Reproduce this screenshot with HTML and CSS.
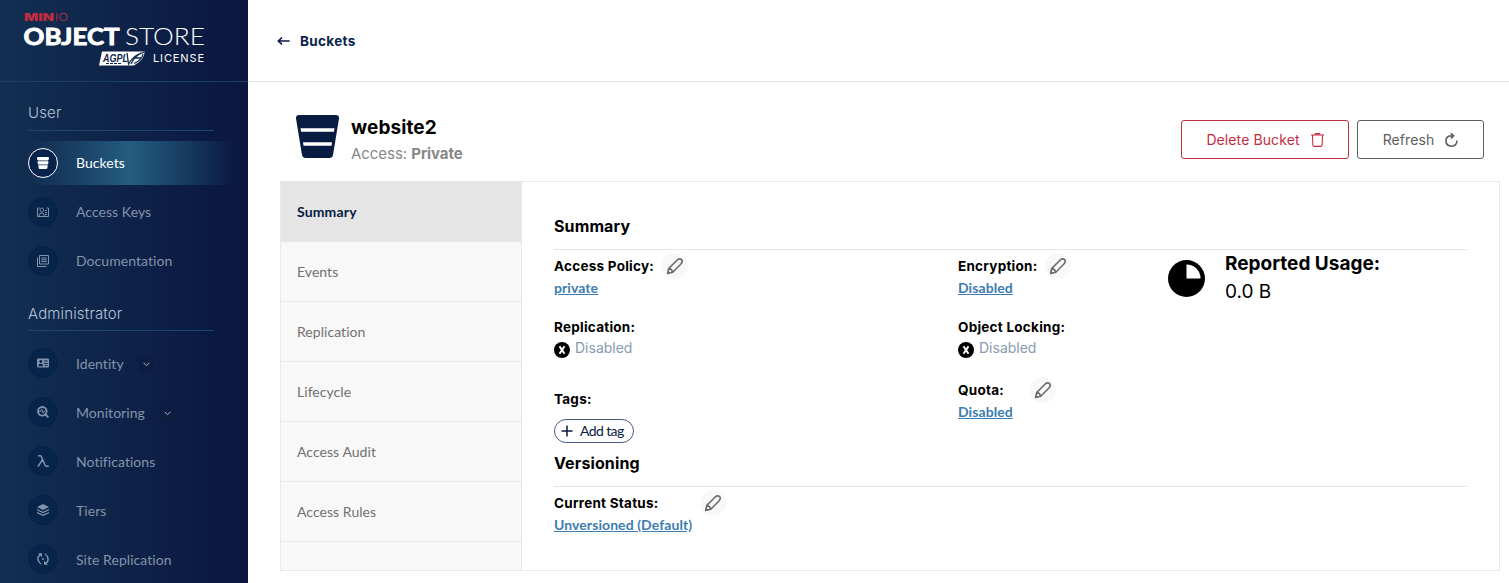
FILE: index.html
```html
<!DOCTYPE html>
<html lang="en">
<head>
<meta charset="utf-8">
<title>MinIO Console</title>
<link rel="stylesheet" href="styles.css">
</head>
<body>
<svg class="defs" width="0" height="0">
  <symbol id="pencil" viewBox="0 0 26 26"><path d="M5.600 20.500L6.800 15.400 15 7.200Q17.600 5 19.600 6.600 21.200 8.600 18.900 11L10.800 19.200zM6.800 15.400Q9.800 16 10.800 19.200" fill="none" stroke="#6d6d6d" stroke-width="1.600" stroke-linejoin="round"/><path d="M5 21l.8-3.600 2.800 2.800z" fill="#6d6d6d"/></symbol>
  <symbol id="off" viewBox="0 0 16 16"><circle cx="8" cy="8" r="8"/><path d="M5.500 4.300l5 7.400M10.500 4.300l-5 7.400" stroke="#fff" stroke-width="2"/></symbol>
</svg>
<div class="app">
  <aside class="sidebar">
    <div class="brand">
      <svg width="248" height="81" viewBox="0 0 248 81">
        <text x="24" y="21" class="logo-min" textLength="30" lengthAdjust="spacingAndGlyphs">MIN</text>
        <text x="55" y="21" class="logo-io" textLength="13" lengthAdjust="spacingAndGlyphs">IO</text>
        <text x="23.500" y="45" class="logo-object" textLength="96" lengthAdjust="spacingAndGlyphs">OBJECT</text>
        <text x="125" y="45" class="logo-store" textLength="80" lengthAdjust="spacingAndGlyphs">STORE</text>
        <path d="M102 51.500H144.500Q145 59 134 65.500H99z" fill="#fff"/>
        <text x="103" y="61.500" class="logo-agpl" textLength="25" lengthAdjust="spacingAndGlyphs">AGPL</text>
        <path d="M106 63.500h15" stroke="#10284c" stroke-width="1" stroke-dasharray="3 1"/>
        <path d="M127 53l1.500 11Q132 57 141 53M131 64Q134 56 144 52M134 63.500Q142 60 143 54M135 58h6" fill="none" stroke="#10284c" stroke-width="1.300"/>
        <text x="153" y="62" class="logo-license" textLength="51">LICENSE</text>
      </svg>
    </div>
    <nav class="menu">
      <div class="group-title">User</div>
      <a class="item active"><span class="circle"><svg viewBox="0 0 12 12"><path d="M.5 0h11l.5 1-.3 2H.3L0 1zM.5 4.200h11l-.4 3H.9zM1.200 8.300h9.600l-.6 3.200-.7.500h-7l-.7-.5z"/><path d="M1 3h10v1.200H1zM1.500 7.200h9v1.100h-9z" opacity=".5"/></svg></span>Buckets</a>
      <a class="item"><span class="circle"><svg viewBox="0 0 12 12"><path d="M2.500 2H.5v8.500h11V2H9.500M8 4.500h2M8 6.500h2M8 8.500h2M2 10q.2-3 2.700-3t2.700 3M4.700 2a1.800 2 0 1 0 .1 0" fill="none" stroke="currentColor"/></svg></span>Access Keys</a>
      <a class="item"><span class="circle"><svg viewBox="0 0 12 12"><path d="M2.500.5h9v8.500h-9zM.5 2.500v9h9M4.200 3h5.600M4.200 4.800h5.600M4.200 6.600h5.600" fill="none" stroke="currentColor"/></svg></span>Documentation</a>
      <div class="group-title admin">Administrator</div>
      <a class="item low"><span class="circle"><svg viewBox="0 0 12 12"><path fill-rule="evenodd" d="M1.300 1.500h9.400Q12 1.500 12 2.800v6.500q0 1.200-1.300 1.200H1.300Q0 10.500 0 9.300V2.800q0-1.300 1.300-1.300zM3.800 3a1.500 1.500 0 1 0 .1 0M1.200 9.200h5Q6 6.800 3.800 6.800T1.200 9.200M7 3.600v1h3.800v-1zM7 6v1h3.800V6zM7.300 8.200v.9h3.500v-.9z"/></svg></span><span>Identity</span><span class="chevron"><svg viewBox="0 0 7 5"><path d="M.5.7l3 3 3-3"/></svg></span></a>
      <a class="item low"><span class="circle"><svg viewBox="0 0 12 12"><circle cx="5.300" cy="5.300" r="4.300" fill="none" stroke="currentColor" stroke-width="1.800"/><path d="M2 5.500h1.600l1.100-2.300 1.400 4 1-2h1.500M8 8l3.200 3.200" fill="none" stroke="currentColor"/><path d="M8.400 7.200l3.600 3.200-1.500 1.500-3.300-3.300z"/></svg></span><span>Monitoring</span><span class="chevron"><svg viewBox="0 0 7 5"><path d="M.5.7l3 3 3-3"/></svg></span></a>
      <a class="item low"><span class="circle"><svg viewBox="0 0 12 12"><path d="M1 .7h2.200Q4 .7 4.400 1.800L8 10q.6 1.400 1.800 1.300h2M5.400 4.800L1 11.500" fill="none" stroke="currentColor" stroke-width="1.500"/></svg></span><span>Notifications</span></a>
      <a class="item low"><span class="circle"><svg viewBox="0 0 12 12"><path d="M6 0l6 3-6 3-6-3zM0 5l6 2.800L12 5v1.300L6 9.300 0 6.300zM0 8l6 2.600L12 8v1.200L6 12 0 9.200z"/></svg></span><span>Tiers</span></a>
      <a class="item low"><span class="circle"><svg viewBox="0 0 12 12"><path d="M4.600 1.300Q1 2.300.9 6q.1 2.200 1.900 3.800M7.400 10.700Q11 9.700 11.100 6q-.1-2.200-1.900-3.800" fill="none" stroke="currentColor" stroke-width="1.500"/><path d="M1 .3h4v4zM11 11.700H7v-4zM7 .8h2.300v2zM5 11.200H2.700v-2zM5 5.300h2v1.400H5z"/></svg></span><span>Site Replication</span></a>
    </nav>
  </aside>
  <main class="main">
    <header class="topbar">
      <svg width="13" height="8" viewBox="0 0 13 8"><path d="M12 4H1.500M4.500 1L1.400 4l3.100 3" fill="none" stroke="#07193e" stroke-width="1.700" stroke-linecap="round"/></svg>
      <span>Buckets</span>
    </header>
    <section class="bucket-head">
      <svg class="bucket-icon" width="43" height="43" viewBox="0 0 43 43"><path d="M3 0h37q3.500 0 3 3.500L37 40q-.5 3-3.500 3h-24Q6.600 43 6 40L0 3.500Q-.4 0 3 0z" fill="#081c42"/><path d="M4.500 13.300h34l-.6 3.400H5.100zM7 27.300h29l-.5 3.400h-28z" fill="#fff"/></svg>
      <div class="bucket-title"><h1>website2</h1><p>Access: <b>Private</b></p></div>
      <div class="actions">
        <button class="btn danger">Delete Bucket<svg width="13" height="14" viewBox="0 0 13 14"><path d="M0 2h13M4 1.500Q4 .6 5 .6h3q1 0 1 1M1.500 2l.4 10.200q.1 1.200 1.200 1.200h6.800q1.100 0 1.200-1.200L11.500 2" fill="none" stroke="currentColor" stroke-width="1.100"/></svg></button>
        <button class="btn">Refresh<svg width="13" height="14" viewBox="0 0 13 14"><path d="M8.500 2.800H7Q1 2.700.9 7.900 1.200 13 6.500 13.200 11.800 12.800 12 7.500M5.800.3l2.800 2.500-2.600 2.500" fill="none" stroke="currentColor" stroke-width="1.600"/></svg></button>
      </div>
    </section>
    <section class="panel">
      <div class="tabs">
        <a class="tab selected">Summary</a><a class="tab">Events</a><a class="tab">Replication</a><a class="tab">Lifecycle</a><a class="tab">Access Audit</a><a class="tab">Access Rules</a>
      </div>
      <div class="content">
        <h2>Summary</h2>
        <div class="grid">
          <div class="col first">
            <div class="field"><div class="label">Access Policy:<svg class="edit"><use href="#pencil"/></svg></div><a class="link">private</a></div>
            <div class="field replication"><div class="label">Replication:</div><div class="off"><svg><use href="#off"/></svg>Disabled</div></div>
            <div class="field tags"><div class="label">Tags:</div><button class="add"><svg width="12" height="12" viewBox="0 0 12 12"><path d="M6 .5v11M.5 6h11" stroke="currentColor" stroke-width="1.500"/></svg><span>Add tag</span></button></div>
          </div>
          <div class="col second">
            <div class="field"><div class="label">Encryption:<svg class="edit"><use href="#pencil"/></svg></div><a class="link">Disabled</a></div>
            <div class="field locking"><div class="label">Object Locking:</div><div class="off"><svg><use href="#off"/></svg>Disabled</div></div>
            <div class="field"><div class="label quota">Quota:<svg class="edit"><use href="#pencil"/></svg></div><a class="link">Disabled</a></div>
          </div>
          <div class="usage">
            <svg width="37" height="37" viewBox="0 0 37 37"><circle cx="18.500" cy="18.500" r="18.500"/><path d="M18.500 4.500a14 14 0 0 1 14 14h-14z" fill="#fff"/></svg>
            <div><h3>Reported Usage:</h3><p>0.0 B</p></div>
          </div>
        </div>
        <h2 class="versioning">Versioning</h2>
        <div class="field"><div class="label status">Current Status:<svg class="edit"><use href="#pencil"/></svg></div><a class="link">Unversioned (Default)</a></div>
      </div>
    </section>
  </main>
</div>
</body>
</html>
```

FILE: styles.css
```css
* { box-sizing: border-box; }
body { margin: 0; background: #fff; font-family: Inter, sans-serif; color: #000; }
h1, h2, h3, p { margin: 0; }
button { font: inherit; background: #fff; }
svg { flex-shrink: 0; }
.defs { position: absolute; }
.app { display: flex; height: 583px; overflow: hidden; }

.sidebar { width: 248px; flex-shrink: 0; background: linear-gradient(90deg, #122f51 0%, #0a1640 100%); overflow: hidden; }
.brand { height: 82px; border-bottom: 1px solid #1c3f68; }
.brand svg { display: block; }
.logo-min { font: 900 10px Inter, sans-serif; fill: #c32c3f; }
.logo-io { font: 300 10px Inter, sans-serif; fill: #c32c3f; }
.logo-object { font: 700 23px Lato, sans-serif; fill: #fff; stroke: #fff; stroke-width: .9px; }
.logo-store { font: 300 23px Lato, sans-serif; fill: #fff; }
.logo-agpl { font: italic 700 11px "Liberation Sans", sans-serif; fill: #10284c; }
.logo-license { font: 400 11px Inter, sans-serif; fill: #fff; }
.menu { padding-top: 19px; }
.group-title { width: 186px; height: 30px; margin: 0 0 10px 28px; border-bottom: 1px solid #1c456f; font-size: 15px; font-weight: 350; line-height: 24px; letter-spacing: .15px; color: #b3c4da; }
.group-title.admin { margin-top: 18px; line-height: 26px; }
.item { display: flex; align-items: center; height: 44px; margin: 0 13px 5px 28px; font: 400 14px/20px Lato, sans-serif; letter-spacing: .05px; color: #8393aa; }
.item.active { color: #fff; background: linear-gradient(90deg, transparent 0%, #235d80 49%, transparent 100%); }
.low > span:not(.circle) { margin-top: 2px; }
.circle { display: flex; align-items: center; justify-content: center; width: 30px; height: 30px; margin-right: 18px; border: 1px solid #082149; border-radius: 50%; background: #07244a; }
.active .circle { border-color: #fff; background: #08234b; }
.circle svg { width: 12px; height: 12px; fill: currentColor; }
.chevron { display: flex; align-items: center; justify-content: center; width: 15px; height: 15px; margin-left: 15px; border-radius: 2px; background: #0d1d40; }
.chevron svg { width: 7px; height: 5px; fill: none; stroke: #a4b4ca; stroke-width: 1; }

.main { flex: 1; min-width: 0; }
.topbar { display: flex; align-items: center; gap: 10px; height: 82px; padding-left: 29px; border-bottom: 1px solid #e2e2e2; font-size: 13.5px; letter-spacing: .35px; font-weight: 700; color: #0a244b; }
.bucket-head { display: flex; height: 99px; padding: 33px 25px 0 48px; }
.bucket-title { margin-left: 12px; }
.bucket-title h1 { font-size: 19px; line-height: 26px; letter-spacing: .1px; }
.bucket-title p { margin-top: 3px; font-size: 15px; line-height: 20px; letter-spacing: -.05px; color: #878787; }
.actions { display: flex; gap: 8px; height: 39px; margin: 5px 0 0 auto; }
.btn { display: flex; align-items: center; justify-content: center; gap: 11px; width: 127px; padding: 0; border: 1px solid #5e5e5e; border-radius: 3px; font-size: 14px; font-weight: 370; letter-spacing: .1px; color: #5e5e5e; }
.btn.danger { width: 168px; border-color: #c32c40; color: #c32c40; }

.panel { display: flex; width: 1220px; height: 390px; margin-left: 32px; border: 1px solid #e9e9e9; }
.tabs { width: 241px; flex-shrink: 0; border-right: 1px solid #e9e9e9; background: #f8f8f8; }
.tab { display: flex; align-items: center; height: 60px; padding-left: 16px; border-bottom: 1px solid #e9e9e9; font: 400 14px Lato, sans-serif; letter-spacing: .05px; color: #707070; }
.tab.selected { background: #e5e5e5; font-weight: 700; letter-spacing: .15px; color: #081c42; }
.content { flex: 1; padding: 32px; }
h2 { height: 36px; border-bottom: 1px solid #e6e6e6; font-size: 16px; line-height: 24px; letter-spacing: .12px; }
.grid { display: grid; grid-template-columns: 404px 210px 1fr; height: 201px; }
.field { display: flex; flex-direction: column; align-items: flex-start; }
.label { display: flex; align-items: center; height: 26px; margin-top: 3px; font-size: 13.5px; letter-spacing: .25px; font-weight: 700; white-space: nowrap; }
.edit { width: 26px; height: 26px; margin-left: 8px; border-radius: 50%; background: #f8f8f8; }
.quota .edit { margin-left: 26px; }
.status .edit { margin-left: 41px; }
.link { font: 700 14px/18px Lato, sans-serif; letter-spacing: .08px; color: #3c7cb1; text-decoration: underline; }
.replication, .locking { margin-top: 14px; }
.locking { margin-bottom: 16px; }
.off { display: flex; align-items: center; gap: 5px; height: 18px; font-size: 14px; font-weight: 370; line-height: 16px; padding-bottom: 2px; color: #8a9ab0; }
.off svg { width: 16px; height: 16px; margin-top: 3px; }
.tags { margin-top: 25px; }
.add { display: flex; align-items: center; gap: 7px; width: 80px; height: 24px; margin-top: 7px; padding: 0 0 0 6px; border: 1px solid #4b5a82; border-radius: 12px; font: 400 14px/18px Lato, sans-serif; letter-spacing: -.6px; color: #081c42; white-space: nowrap; }
.add span { margin-top: -1px; }
.usage { display: flex; gap: 20px; }
.usage svg { margin-top: 10px; }
.usage h3 { font-size: 19px; line-height: 28px; }
.usage p { font-size: 19px; line-height: 28px; font-weight: 370; }
```
